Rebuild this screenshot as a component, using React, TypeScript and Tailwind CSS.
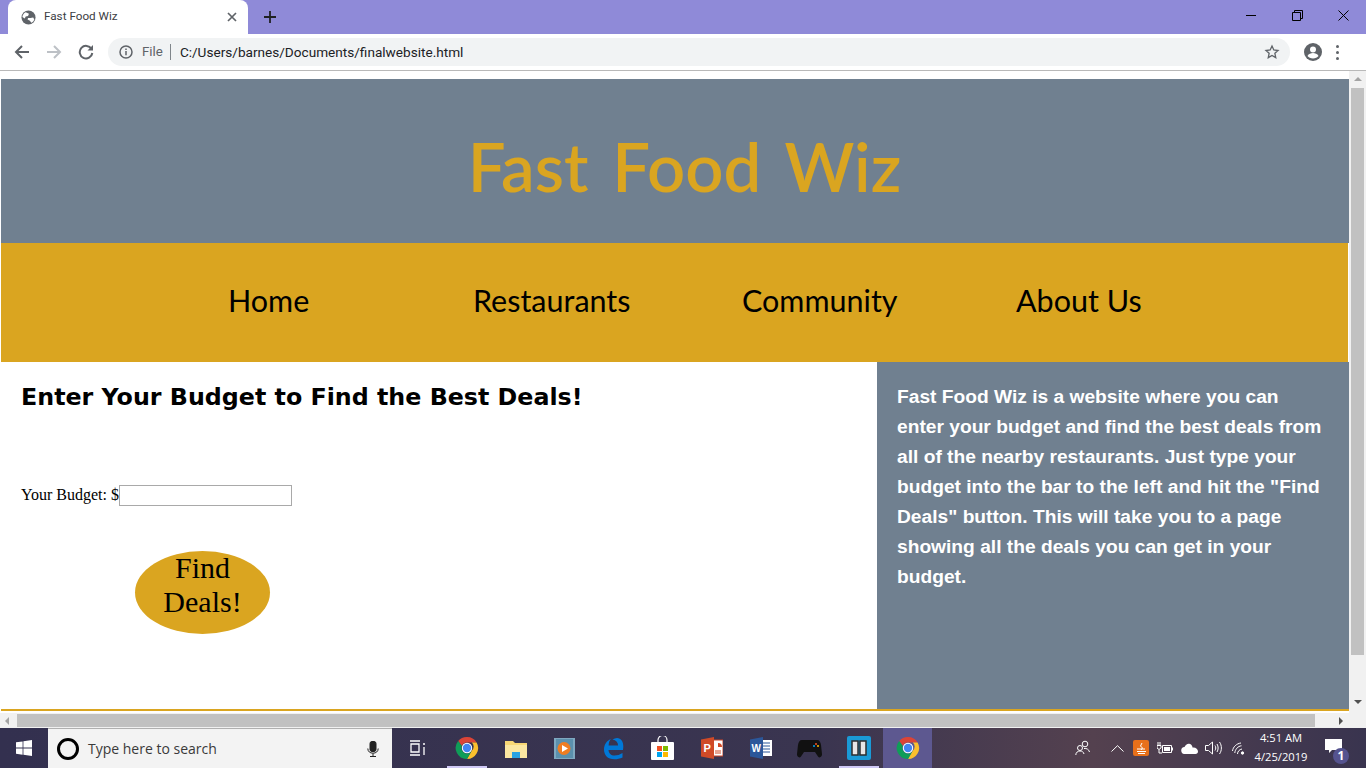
import React from "react";

const taskIcon = "flex h-10 w-[49px] items-center justify-center";

function ChromeLogo({ size = 24 }: { size?: number }) {
  return (
    <svg width={size} height={size} viewBox="0 0 24 24">
      <path d="M12 1a11 11 0 0 1 9.600 5.500H12a5.500 5.500 0 0 0-5.200 3.600L3.200 5A11 11 0 0 1 12 1Z" fill="#db4437" />
      <path d="M21.600 6.500A11 11 0 0 1 12 23l4.700-8.200a5.500 5.500 0 0 0 .1-8.300Z" fill="#fbc02d" />
      <path d="M3.200 5A11 11 0 0 0 12 23l4.700-8.200a5.500 5.500 0 0 1-9.900-4.700Z" fill="#0f9d58" />
      <circle cx="12" cy="12" r="5.200" fill="#fff" />
      <circle cx="12" cy="12" r="4.200" fill="#4285f4" />
    </svg>
  );
}

function TabBar() {
  return (
    <div className="flex h-[34px] bg-[#8f8ad8]">
      <div className="ml-2 flex h-[34px] w-[240px] items-center rounded-t-lg bg-white pl-[13px] pr-[11px]">
        <svg width="15" height="15" viewBox="0 0 16 16">
          <circle cx="8" cy="8" r="7.500" fill="#5f6368" />
          <path d="M5 2.500 8.500 4 7.500 6.500 5 7 4 9 1.500 7.500C1.700 5.500 3 3.500 5 2.500ZM10 8.500l3-.5 1.200 2c-.6 1.600-1.700 2.800-3.200 3.500l-1.500-2-2.500-1.500.5-1.500Z" fill="#fff" />
        </svg>
        <span className="ml-[8px] flex-1 font-['Roboto',sans-serif] text-[11.7px] text-[#3c4043]">Fast Food Wiz</span>
        <svg width="10" height="10" viewBox="0 0 10 10" stroke="#5f6368" strokeWidth="1.700">
          <path d="M1 1l8 8M9 1l-8 8" />
        </svg>
      </div>
      <div className="ml-4 flex h-[34px] items-center">
        <svg width="12" height="12" viewBox="0 0 12 12" stroke="#202124" strokeWidth="1.800">
          <path d="M6 0v12M0 6h12" />
        </svg>
      </div>
      <div className="ml-auto flex h-[30px] items-center">
        <div className="flex w-[46px] justify-center">
          <div className="h-px w-[10px] bg-black" />
        </div>
        <div className="flex w-[46px] justify-center">
          <svg width="11" height="11" viewBox="0 0 11 11" fill="none" stroke="#000">
            <path d="M.5 2.500h8v8h-8zM2.500 2.500v-2h8v8h-2" />
          </svg>
        </div>
        <div className="flex w-[46px] justify-center">
          <svg width="11" height="11" viewBox="0 0 11 11" stroke="#000">
            <path d="M.5.500l10 10M10.500.500l-10 10" />
          </svg>
        </div>
      </div>
    </div>
  );
}

function ToolBar() {
  return (
    <div className="flex h-[37px] items-center border-b border-[#b9b9b9] bg-white">
      <svg className="ml-[14px]" width="16" height="16" viewBox="0 0 16 16" fill="none" stroke="#5f6368" strokeWidth="2">
        <path d="M15 8H2M8 2 2 8l6 6" />
      </svg>
      <svg className="ml-4" width="16" height="16" viewBox="0 0 16 16" fill="none" stroke="#bdc1c6" strokeWidth="2">
        <path d="M1 8h13M8 2l6 6-6 6" />
      </svg>
      <svg className="ml-4" width="16" height="16" viewBox="0 0 16 16" fill="none" stroke="#5f6368" strokeWidth="2">
        <path d="M13.500 5A6.300 6.300 0 1 0 14.300 9" />
        <path d="M15 1v5.500H9.500Z" fill="#5f6368" stroke="none" />
      </svg>
      <div className="ml-[14px] flex h-7 w-[1182px] items-center rounded-full bg-[#f1f3f4] pl-[11px] pr-[10px]">
        <svg width="14" height="14" viewBox="0 0 14 14" fill="none" stroke="#5f6368" strokeWidth="1.500">
          <circle cx="7" cy="7" r="6" />
          <path d="M7 6v4.200M7 3.500v1.400" />
        </svg>
        <span className="ml-[9px] font-['Roboto',sans-serif] text-[13.3px] text-[#5f6368]">File</span>
        <div className="ml-[7px] h-4 w-px bg-[#80868b]" />
        <span className="ml-[9px] flex-1 font-['Roboto',sans-serif] text-[13.6px] text-[#202124]">C:/Users/barnes/Documents/finalwebsite.html</span>
        <svg width="16" height="16" viewBox="0 0 24 24" fill="none" stroke="#5f6368" strokeWidth="2">
          <path d="M12 3l2.700 6 6.300.7-4.700 4.300 1.300 6.500L12 17.200 6.400 20.500l1.300-6.500L3 9.700 9.300 9Z" />
        </svg>
      </div>
      <svg className="ml-[14px]" width="18" height="18" viewBox="0 0 18 18">
        <circle cx="9" cy="9" r="9" fill="#5f6368" />
        <circle cx="9" cy="6.500" r="3" fill="#fff" />
        <path d="M3.500 13c1-2.200 3.500-3 5.500-3s4.500.8 5.500 3c-1.200 1.500-3.200 2.400-5.500 2.400S4.700 14.500 3.500 13Z" fill="#fff" />
      </svg>
      <div className="ml-[14px] flex flex-col gap-[3px]">
        <div className="size-[3px] rounded-full bg-[#5f6368]" />
        <div className="size-[3px] rounded-full bg-[#5f6368]" />
        <div className="size-[3px] rounded-full bg-[#5f6368]" />
      </div>
    </div>
  );
}

function Page() {
  return (
    <div className="flex h-[657px] bg-white">
      <div className="flex w-[1349px] flex-col">
        <div className="h-2 bg-white" />
        <div className="ml-px flex h-[164px] items-center justify-center bg-[#708090] pl-[19px] pt-[10px]">
          <h1 className="font-['Lato',sans-serif] text-[67px] font-semibold leading-none text-[#daa520] [word-spacing:7px]">Fast Food Wiz</h1>
        </div>
        <nav className="ml-px mr-px flex h-[119px] items-center bg-[#daa520] pb-[3px] font-['Lato',sans-serif] text-[30.5px] text-black">
          <span className="ml-[227px] w-[245px]">Home</span>
          <span className="w-[269px]">Restaurants</span>
          <span className="w-[274px]">Community</span>
          <span>About Us</span>
        </nav>
        <div className="ml-px flex h-[347px]">
          <div className="w-[876px] bg-white pl-5">
            <h2 className="mt-5 font-['DejaVu_Sans',sans-serif] text-[23.75px] font-bold leading-[30px] text-black">Enter Your Budget to Find the Best Deals!</h2>
            <div className="mt-[71px] flex items-center font-['Liberation_Serif',serif] text-[16px] text-black">
              <span>Your Budget: $</span>
              <input className="h-[21px] w-[173px] border border-[#a9a9a9] bg-white" type="text" />
            </div>
            <button className="ml-[114px] mt-[44px] block h-[83px] w-[135px] rounded-[50%] bg-[#daa520] pb-[16px] font-['Liberation_Serif',serif] text-[30px] leading-[34px] text-black">
              Find Deals!
            </button>
          </div>
          <div className="flex-1 bg-[#708090] px-5 pt-5 font-['Liberation_Sans',sans-serif] text-[19.2px] font-bold leading-[30px] text-white">
            Fast Food Wiz is a website where you can enter your budget and find the best deals from all of the nearby restaurants. Just type your budget into the bar to the left and hit the "Find Deals" button. This will take you to a page showing all the deals you can get in your budget.
          </div>
        </div>
        <div className="ml-px h-[2px] bg-[#daa520]" />
        <div className="h-[2px] bg-white" />
        <div className="flex h-[15px] items-center bg-[#f1f1f1]">
          <div className="ml-[5px] h-0 w-0 border-y-[4px] border-r-[4px] border-y-transparent border-r-[#a3a3a3]" />
          <div className="ml-[8px] h-[13px] w-[1298px] bg-[#c1c1c1]" />
          <div className="ml-auto mr-[6px] h-0 w-0 border-y-[4px] border-l-[4px] border-y-transparent border-l-[#505050]" />
        </div>
      </div>
      <div className="flex w-[17px] flex-col items-center bg-[#f1f1f1]">
        <div className="mt-[6px] h-0 w-0 border-x-[4px] border-b-[4px] border-x-transparent border-b-[#a3a3a3]" />
        <div className="mt-[7px] h-[567px] w-[13px] bg-[#c1c1c1]" />
        <div className="mt-[45px] h-0 w-0 border-x-[4px] border-t-[4px] border-x-transparent border-t-[#505050]" />
      </div>
    </div>
  );
}

function TaskBar() {
  return (
    <div className="flex h-10 items-center bg-[linear-gradient(90deg,#33304f_0%,#3a3550_60%,#54414f_80%,#39344f_100%)] text-white">
      <div className="flex h-10 w-12 items-center justify-center">
        <svg width="16" height="16" viewBox="0 0 16 16" fill="#fff">
          <path d="M0 2.300 6.600 1.400v6.200H0ZM7.400 1.300 16 0v7.600H7.400ZM0 8.400h6.600v6.300L0 13.700ZM7.400 8.400H16V16l-8.600-1.300Z" />
        </svg>
      </div>
      <div className="flex h-10 w-[344px] items-center border-t border-[#b0b0b0] bg-[#f3f3f3] pl-[9px] pr-[13px]">
        <div className="size-[22px] rounded-full border-[3px] border-black" />
        <span className="ml-[9px] flex-1 font-['Open_Sans',sans-serif] text-[14px] text-[#3a3a3a]">Type here to search</span>
        <svg width="12" height="16" viewBox="0 0 12 16" fill="none" stroke="#222">
          <rect x="3" y="0.500" width="6" height="10" rx="2" fill="#222" />
          <path d="M.8 7.500c0 3 2.200 4.700 5.200 4.700s5.200-1.700 5.200-4.700M6 12.500V15M3 15.500h6" />
        </svg>
      </div>
      <div className="flex h-10 w-[50px] items-center justify-center">
        <svg width="17" height="16" viewBox="0 0 17 16" fill="none" stroke="#fff" strokeWidth="1.300">
          <path d="M1 1h10M1 15h10M2 4h8v8H2ZM14 4h2M15 7v8" />
        </svg>
      </div>
      <div className={`${taskIcon} relative`}>
        <ChromeLogo />
        <div className="absolute bottom-0 h-[2px] w-10 bg-[#cfc8f5]" />
      </div>
      <div className={taskIcon}>
        <svg width="22" height="19" viewBox="0 0 22 19">
          <path d="M0 2h8l2 2h12v15H0Z" fill="#f8d775" />
          <path d="M0 6h22v13H0Z" fill="#fbe7a1" />
          <path d="M7 13h8v6H7Z" fill="#29a3e3" />
        </svg>
      </div>
      <div className={taskIcon}>
        <svg width="21" height="21" viewBox="0 0 21 21">
          <rect width="21" height="21" fill="#7fa8c0" />
          <rect x="2" y="1" width="17" height="19" fill="#5b90ad" />
          <circle cx="10" cy="10.500" r="6.500" fill="#ef7d22" />
          <path d="M8 7l6 3.500L8 14Z" fill="#fff" />
        </svg>
      </div>
      <div className={taskIcon}>
        <svg width="21" height="23" viewBox="0 0 21 23">
          <path d="M20 13H5.500c.3 3.500 2.500 5.500 6 5.500 2.800 0 5.500-.8 8-2.500v4.500c-2.500 1.200-5.200 1.800-8 1.800C4.500 22.300 1 18 1 12.500 1 8 3.500 3.500 8 2 6.500 3.500 5.800 5 5.600 8.500h9.500C15 5 13 3 9.500 2.500 11 1.500 12.500 1 14 1c4 0 6.500 3.500 6.300 9Z" fill="#0078d7" />
        </svg>
      </div>
      <div className={taskIcon}>
        <svg width="23" height="24" viewBox="0 0 23 24">
          <path d="M7 7V4a4.500 4.500 0 0 1 9 0v3" fill="none" stroke="#fff" strokeWidth="1.200" />
          <rect y="6" width="23" height="18" rx="1" fill="#fff" />
          <rect x="6" y="10" width="5" height="5" fill="#f25022" />
          <rect x="12" y="10" width="5" height="5" fill="#7fba00" />
          <rect x="6" y="16" width="5" height="5" fill="#00a4ef" />
          <rect x="12" y="16" width="5" height="5" fill="#ffb900" />
        </svg>
      </div>
      <div className={taskIcon}>
        <svg width="22" height="22" viewBox="0 0 22 22">
          <rect x="9" y="3" width="13" height="16" fill="#fff" stroke="#c9472a" />
          <path d="M14 6h3v4h4a4 4 0 0 0-4-4" fill="#d04a27" />
          <path d="M14 14h6M14 16h6" stroke="#d04a27" />
          <path d="M0 2.500 13 0v22L0 19.500Z" fill="#d04a27" />
          <text x="2.500" y="15" fontSize="11" fontWeight="700" fontFamily="Liberation Sans" fill="#fff">P</text>
        </svg>
      </div>
      <div className={taskIcon}>
        <svg width="22" height="22" viewBox="0 0 22 22">
          <rect x="9" y="3" width="13" height="16" fill="#fff" />
          <path d="M13 6h7M13 9h7M13 12h7M13 15h7" stroke="#2b579a" />
          <path d="M0 2.500 13 0v22L0 19.500Z" fill="#2b579a" />
          <text x="1.500" y="14.500" fontSize="10" fontWeight="700" fontFamily="Liberation Sans" fill="#fff">W</text>
        </svg>
      </div>
      <div className={taskIcon}>
        <svg width="25" height="21" viewBox="0 0 25 21">
          <path d="M5 2h15c2.500 0 3.500 2 4 5l1 9c.2 3-2.500 4.500-4 2.500L18 14H7l-3 4.500C2.500 20.500-.2 19 0 16l1-9c.5-3 1.500-5 4-5Z" fill="#111" />
          <circle cx="19" cy="6" r="1" fill="#f25022" />
          <circle cx="21" cy="8" r="1" fill="#ffb900" />
          <circle cx="17" cy="8" r="1" fill="#00a4ef" />
        </svg>
      </div>
      <div className={`${taskIcon} relative`}>
        <svg width="24" height="24" viewBox="0 0 24 24">
          <rect width="24" height="24" rx="2" fill="#1a9ad6" />
          <path d="M5 5h6v14H5ZM13 5h6v14h-6Z" fill="#e6e6e6" stroke="#2d2d2d" strokeWidth="1.500" />
        </svg>
        <div className="absolute bottom-0 h-[2px] w-10 bg-[#cfc8f5]" />
      </div>
      <div className={`${taskIcon} relative bg-[#5d5890]`}>
        <ChromeLogo />
      </div>
      <div className="ml-auto flex h-10 items-center">
        <svg width="15" height="16" viewBox="0 0 15 16" fill="none" stroke="#fff">
          <circle cx="10" cy="4" r="2.800" />
          <circle cx="5" cy="8" r="2.500" />
          <path d="M.8 15c0-2.500 2-4 4.200-4s3.500 1 4 3M9 8.500c2.500-.5 5 1 5.500 3.500" />
        </svg>
        <svg className="ml-[21px]" width="13" height="7" viewBox="0 0 13 7" fill="none" stroke="#fff">
          <path d="M.5 6.500 6.500.7l6 5.800" />
        </svg>
        <div className="ml-[9px] flex size-[16px] items-center justify-center rounded-[2px] bg-[#e8701a]">
          <svg width="11" height="12" viewBox="0 0 11 12" fill="none" stroke="#fff">
            <path d="M1 9.500h9M2 11.500h7M6 1 4.500 4 6.500 6 5 8M1 7h8" />
          </svg>
        </div>
        <svg className="ml-[8px]" width="16" height="12" viewBox="0 0 16 12" fill="none" stroke="#fff">
          <path d="M5.500 3.500h9v7h-9Z" />
          <path d="M7 5h6v4H7Z" fill="#fff" stroke="none" />
          <path d="M15 5.500h1v3h-1Z" fill="#fff" stroke="none" />
          <path d="M1 0v3M3 0v3M0 3.500h4V6L2 7.500 0 6ZM2 7.500V11h3" />
        </svg>
        <svg className="ml-[8px]" width="17" height="11" viewBox="0 0 17 11" fill="#fff">
          <path d="M4 11a3.500 3.500 0 0 1-.500-7C4.500 1.500 7 0 9 1c1.500.5 2.500 2 2.500 3.500 3-.5 5.500 1.500 5.500 4 0 1.500-1 2.500-2.500 2.500Z" />
        </svg>
        <svg className="ml-[7px]" width="17" height="14" viewBox="0 0 17 14" fill="none" stroke="#fff">
          <path d="M.5 4.500h3l4-3.500v12l-4-3.500h-3ZM10 4.500c1 1.500 1 3.500 0 5M12 3c1.500 2.500 1.500 5.500 0 8M14.500 1c2.500 3.500 2.500 8.500 0 12" />
        </svg>
        <svg className="ml-[10px]" width="13" height="13" viewBox="0 0 13 13" fill="none" stroke="#fff">
          <path d="M.5 9C1 5 4.500 1.500 9 1M2.800 11C3 7.500 6 4 9.500 3.800M5.500 12C5.500 9.500 7.500 7.300 10 7" />
          <circle cx="10.500" cy="11" r="1.200" fill="#fff" />
        </svg>
        <div className="-mt-[2px] ml-[8px] flex w-[56px] flex-col items-center font-['Open_Sans',sans-serif] text-[11.2px] leading-[19px] text-white">
          <span>4:51 AM</span>
          <span>4/25/2019</span>
        </div>
        <div className="relative ml-[16px] mr-[21px] flex h-10 w-[20px] items-center">
          <svg className="-mt-[3px]" width="17" height="15" viewBox="0 0 17 15" fill="#fff">
            <path d="M0 0h17v11H7l-3 3v-3H0Z" />
          </svg>
          <div className="absolute bottom-[4px] left-[8px] flex size-[16px] items-center justify-center rounded-full bg-[#55538f] font-['Open_Sans',sans-serif] text-[12px] font-bold text-white">1</div>
        </div>
      </div>
    </div>
  );
}

export default function App() {
  return (
    <div className="flex h-[768px] w-[1366px] flex-col overflow-hidden">
      <TabBar />
      <ToolBar />
      <Page />
      <TaskBar />
    </div>
  );
}
